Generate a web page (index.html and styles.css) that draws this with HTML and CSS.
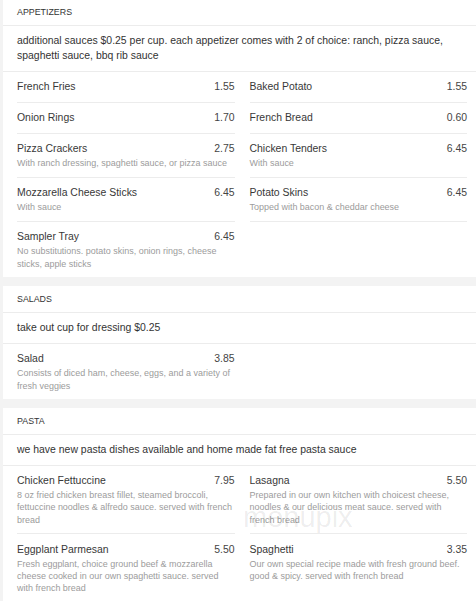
FILE: index.html
```html
<!DOCTYPE html>
<html>
<head>
<meta charset="utf-8">
<link rel="stylesheet" href="styles.css">
</head>
<body>
<div class="page">
  <section class="card first">
    <div class="card-head">APPETIZERS</div>
    <div class="note">additional sauces $0.25 per cup. each appetizer comes with 2 of choice: ranch, pizza sauce, spaghetti sauce, bbq rib sauce</div>
    <div class="items">
      <div class="item"><div class="row"><span class="name">French Fries</span><span class="price">1.55</span></div></div>
      <div class="item"><div class="row"><span class="name">Baked Potato</span><span class="price">1.55</span></div></div>
      <div class="item"><div class="row"><span class="name">Onion Rings</span><span class="price">1.70</span></div></div>
      <div class="item"><div class="row"><span class="name">French Bread</span><span class="price">0.60</span></div></div>
      <div class="item"><div class="row"><span class="name">Pizza Crackers</span><span class="price">2.75</span></div><div class="desc">With ranch dressing, spaghetti sauce, or pizza sauce</div></div>
      <div class="item"><div class="row"><span class="name">Chicken Tenders</span><span class="price">6.45</span></div><div class="desc">With sauce</div></div>
      <div class="item"><div class="row"><span class="name">Mozzarella Cheese Sticks</span><span class="price">6.45</span></div><div class="desc">With sauce</div></div>
      <div class="item"><div class="row"><span class="name">Potato Skins</span><span class="price">6.45</span></div><div class="desc">Topped with bacon &amp; cheddar cheese</div></div>
      <div class="item last"><div class="row"><span class="name">Sampler Tray</span><span class="price">6.45</span></div><div class="desc">No substitutions. potato skins, onion rings, cheese sticks, apple sticks</div></div>
    </div>
  </section>

  <section class="card">
    <div class="card-head">SALADS</div>
    <div class="note">take out cup for dressing $0.25</div>
    <div class="items">
      <div class="item last"><div class="row"><span class="name">Salad</span><span class="price">3.85</span></div><div class="desc">Consists of diced ham, cheese, eggs, and a variety of fresh veggies</div></div>
    </div>
  </section>

  <section class="card">
    <div class="card-head">PASTA</div>
    <div class="note">we have new pasta dishes available and home made fat free pasta sauce</div>
    <div class="items">
      <div class="item"><div class="row"><span class="name">Chicken Fettuccine</span><span class="price">7.95</span></div><div class="desc">8 oz fried chicken breast fillet, steamed broccoli, fettuccine noodles &amp; alfredo sauce. served with french bread</div></div>
      <div class="item"><div class="row"><span class="name">Lasagna</span><span class="price">5.50</span></div><div class="desc">Prepared in our own kitchen with choicest cheese, noodles &amp; our delicious meat sauce. served with french bread</div></div>
      <div class="item last"><div class="row"><span class="name">Eggplant Parmesan</span><span class="price">5.50</span></div><div class="desc">Fresh eggplant, choice ground beef &amp; mozzarella cheese cooked in our own spaghetti sauce. served with french bread</div></div>
      <div class="item last"><div class="row"><span class="name">Spaghetti</span><span class="price">3.35</span></div><div class="desc">Our own special recipe made with fresh ground beef. good &amp; spicy. served with french bread</div></div>
    </div>
    <span class="watermark">menupix</span>
  </section>
</div>
</body>
</html>
```
FILE: styles.css
```css
html, body {
  margin: 0;
  padding: 0;
  background: #f3f3f3;
}

body {
  font-family: "Liberation Sans", Arial, sans-serif;
  color: #333;
}

.page {
  display: flex;
  flex-direction: column;
  gap: 9.5px;
  padding-left: 3px;
}

.card {
  position: relative;
  background: #fff;
}

.card.first {
  margin-top: -1px;
}

.card-head {
  padding: 8px 9px 6.5px 14px;
  font-size: 8.85px;
  line-height: 11px;
  color: #333;
  border-bottom: 1px solid #ececec;
}

.note {
  padding: 7.5px 9px 7.5px 14px;
  font-size: 10.45px;
  line-height: 15px;
  color: #333;
  border-bottom: 1px solid #ececec;
}

.items {
  display: grid;
  grid-template-columns: 1fr 1fr;
  column-gap: 15px;
  padding: 0 9px 0 14px;
}

.item {
  padding: 7.5px 0;
  border-bottom: 1px solid #ececec;
}

.item.last {
  border-bottom: none;
  padding-bottom: 7px;
}

.row {
  display: flex;
  justify-content: space-between;
  font-size: 10.45px;
  line-height: 15px;
  color: #383838;
}

.price {
  color: #444;
}

.desc {
  margin-top: 1px;
  font-size: 8.97px;
  line-height: 12.2px;
  color: #9c9c9c;
}

.watermark {
  position: absolute;
  left: 240px;
  top: 95px;
  font-size: 29px;
  line-height: 28px;
  color: rgba(0, 0, 0, 0.08);
  pointer-events: none;
}
```
